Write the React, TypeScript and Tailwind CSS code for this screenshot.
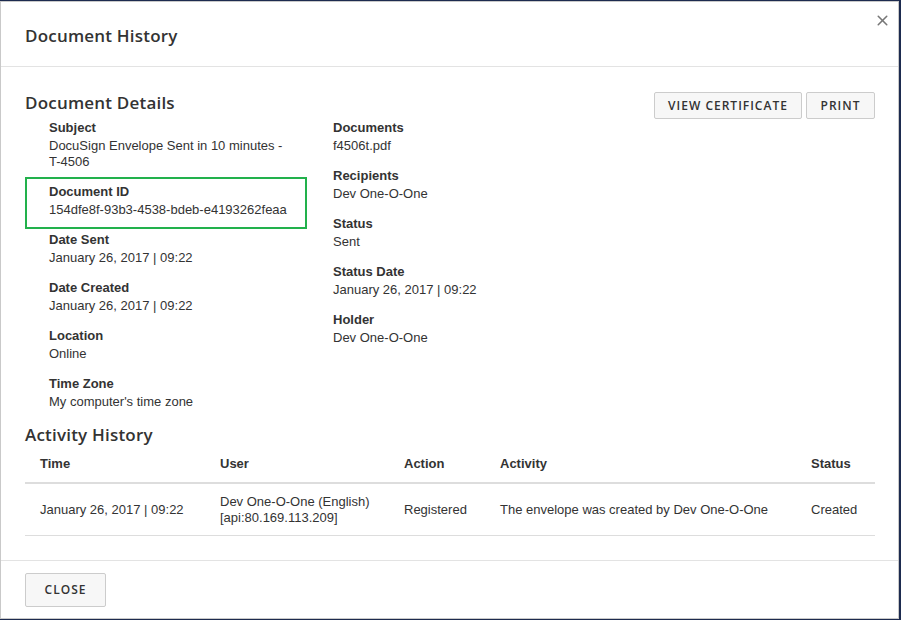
import { X } from "lucide-react";

const heading = "font-['Open_Sans',sans-serif] font-semibold text-[17px] text-[#333] tracking-[0.2px]";
const button =
  "rounded-[2px] border border-[#ccc] bg-[#f7f7f7] font-['Open_Sans',sans-serif] text-[12px] font-semibold uppercase tracking-[1px] text-[#333]";

const leftFields: { label: string; value: string[]; boxed?: boolean }[] = [
  { label: "Subject", value: ["DocuSign Envelope Sent in 10 minutes -", "T-4506"] },
  { label: "Document ID", value: ["154dfe8f-93b3-4538-bdeb-e4193262feaa"], boxed: true },
  { label: "Date Sent", value: ["January 26, 2017 | 09:22"] },
  { label: "Date Created", value: ["January 26, 2017 | 09:22"] },
  { label: "Location", value: ["Online"] },
  { label: "Time Zone", value: ["My computer's time zone"] },
];

const rightFields = [
  { label: "Documents", value: "f4506t.pdf" },
  { label: "Recipients", value: "Dev One-O-One" },
  { label: "Status", value: "Sent" },
  { label: "Status Date", value: "January 26, 2017 | 09:22" },
  { label: "Holder", value: "Dev One-O-One" },
];

function Field({ label, value }: { label: string; value: string[] }) {
  return (
    <div>
      <div className="h-[18px] font-bold leading-[18px]">{label}</div>
      <div className="pt-px">
        {value.map((v) => (
          <div key={v} className="leading-[16px]">
            {v}
          </div>
        ))}
      </div>
    </div>
  );
}

export default function App() {
  return (
    <div className="h-[620px] w-[901px] overflow-hidden bg-[#1d2b4f] pt-px">
      <div className="flex h-[618px] w-[899px] flex-col border border-[#c9c9c9] bg-white font-['Liberation_Sans',Arial,sans-serif] text-[13px] text-[#333]">
        <header className="relative flex h-[65px] shrink-0 items-center border-b border-[#e3e3e3] px-6 pt-[4px]">
          <h1 className={heading}>Document History</h1>
          <button className="absolute right-[7px] top-[10px] p-0 text-[#777]">
            <X className="h-[17px] w-[17px]" strokeWidth={2.2} />
          </button>
        </header>

        <main className="flex-1 pl-6 pr-[23px] pt-[24px]">
          <div className="flex h-[27px] items-start justify-between">
            <h2 className={heading + " leading-[24px]"}>Document Details</h2>
            <div className="mt-px flex gap-1">
              <button className={button + " h-[27px] w-[148px]"}>View Certificate</button>
              <button className={button + " h-[27px] w-[69px]"}>Print</button>
            </div>
          </div>

          <div className="flex">
            <div className="flex w-[282px] flex-col">
              {leftFields.map((f) =>
                f.boxed ? (
                  <div
                    key={f.label}
                    className="-mt-[5px] mb-px border-2 border-[#22b14c] pb-[9px] pl-[22px] pt-[4px]"
                  >
                    <Field label={f.label} value={f.value} />
                  </div>
                ) : (
                  <div key={f.label} className="mb-[12px] pl-6 pt-px">
                    <Field label={f.label} value={f.value} />
                  </div>
                )
              )}
            </div>
            <div className="flex flex-col pl-[26px]">
              {rightFields.map((f) => (
                <div key={f.label} className="mb-[12px] pt-px">
                  <Field label={f.label} value={[f.value]} />
                </div>
              ))}
            </div>
          </div>

          <h2 className={heading + " mt-px leading-[24px]"}>Activity History</h2>
          <table className="mt-[3px] w-full table-fixed border-collapse text-left">
            <colgroup>
              <col className="w-[180px]" />
              <col className="w-[184px]" />
              <col className="w-[96px]" />
              <col className="w-[311px]" />
              <col />
            </colgroup>
            <thead>
              <tr className="border-b-2 border-[#ddd]">
                {["Time", "User", "Action", "Activity", "Status"].map((h) => (
                  <th key={h} className="h-[33px] px-[15px] pb-[4px] font-bold">
                    {h}
                  </th>
                ))}
              </tr>
            </thead>
            <tbody>
              <tr className="border-b border-[#ddd] leading-[16px]">
                <td className="h-[52px] px-[15px] pt-[2px]">January 26, 2017 | 09:22</td>
                <td className="px-[15px] pt-[2px]">
                  Dev One-O-One (English)
                  <br />
                  [api:80.169.113.209]
                </td>
                <td className="px-[15px] pt-[2px]">Registered</td>
                <td className="px-[15px] pt-[2px]">The envelope was created by Dev One-O-One</td>
                <td className="px-[15px] pt-[2px]">Created</td>
              </tr>
            </tbody>
          </table>
        </main>

        <footer className="flex h-[58px] shrink-0 items-center border-t border-[#e3e3e3] px-6">
          <button className={button + " h-[34px] w-[81px]"}>Close</button>
        </footer>
      </div>
    </div>
  );
}
